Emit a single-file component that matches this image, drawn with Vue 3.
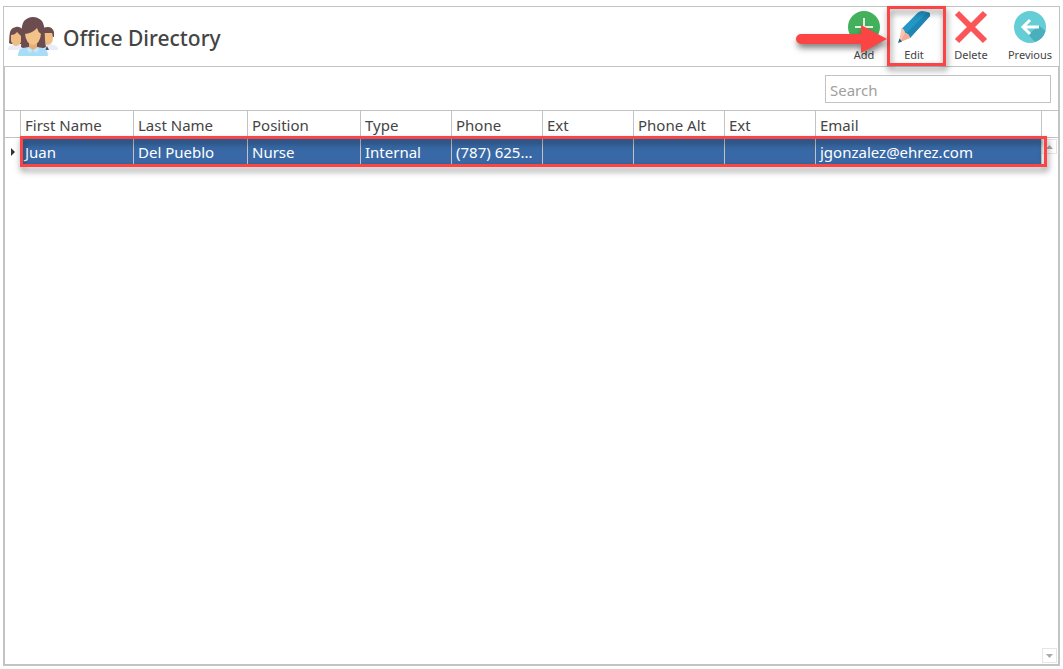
<script setup>
import { ref } from 'vue'

const search = ref('')
const columns = [
  { label: 'First Name', size: 'c113' },
  { label: 'Last Name', size: 'c114' },
  { label: 'Position', size: 'c113' },
  { label: 'Type', size: 'c91' },
  { label: 'Phone', size: 'c91' },
  { label: 'Ext', size: 'c91' },
  { label: 'Phone Alt', size: 'c91' },
  { label: 'Ext', size: 'c91' },
  { label: 'Email', size: 'fill' },
]
const rows = [
  ['Juan', 'Del Pueblo', 'Nurse', 'Internal', '(787) 625...', '', '', '', 'jgonzalez@ehrez.com'],
]
</script>

<template>
  <main class="window">
    <header class="bar">
      <svg class="people" viewBox="0 0 50 40" aria-hidden="true">
        <path d="M0 32c0-4 5-4 8-5h10v6H0z" fill="#e9edf8" />
        <path d="M50 32c0-4-5-4-8-5H34v6h16z" fill="#e9edf8" />
        <path d="M1 26C2 19 0 11 8 10c5-1 8 3 8 8v9H3z" fill="#6d4c4f" />
        <path d="M3 18q4 0 6-3l4 4v6q-2 4-5 4t-5-5z" fill="#efbd83" />
        <path d="M35 11q9-3 11 4v5H35z" fill="#6d4c4f" />
        <path d="M35 16h9l1 4q0 8-6 8-3 0-5-3z" fill="#efbd83" />
        <path d="M39 29l2 4h-4z" fill="#40506c" />
        <path d="M13 30C14 22 12 10 16 4q4-4 9-4t9 4c4 6 2 18 4 26-5 3-21 3-25 0z" fill="#6d4c4f" />
        <path d="M10 39q0-7 5-8l6-1h8l6 1q5 1 5 8z" fill="#a9dcf7" />
        <path d="M21 25h8v6q-4 5-8 0z" fill="#e5ae76" />
        <path d="M17 17q8-1 12-6 1 4 4 6-1 10-8 11-7-1-8-11z" fill="#f2c38b" />
        <path d="M20 30l5 3 5-3 1 3-3 3-3-3-3 3-3-3z" fill="#c3e8fb" />
      </svg>
      <h1>Office Directory</h1>

      <nav class="tools" aria-label="Directory actions">
        <button type="button" class="tool">
          <svg viewBox="0 0 34 34" aria-hidden="true">
            <circle cx="17" cy="17" r="16" fill="#43b05c" />
            <path d="M17 8v18M8 17h18" stroke="#e6f5e9" stroke-width="2" />
          </svg>
          <span>Add</span>
        </button>

        <div class="marked">
          <button type="button" class="tool">
            <svg viewBox="0 0 34 34" aria-hidden="true">
              <path d="M4.500 19L21 2.500Q23 1 25 1q5 0 8 2.500V6L13 28z" fill="#2597c4" />
              <path d="M9 23.500L31 2l2 1.500V6L13 28z" fill="#1f86b3" />
              <path d="M4.500 18.500q3 0 3.500 4.500 4 .5 5 5L3 32l-1-1z" fill="#fbc4b0" />
              <path d="M8 23q4 .5 5 5L3 32z" fill="#f3ac98" />
              <path d="M2.500 28.500l2.500 3-4 1.500z" fill="#17648c" />
            </svg>
            <span>Edit</span>
          </button>
          <div class="frame tool-frame"></div>
          <svg class="arrow" viewBox="0 0 92 30" aria-hidden="true">
            <path d="M5 10h60V1l26 14-26 14v-9H5a5 5 0 0 1 0-10z" fill="#fb4444" />
          </svg>
        </div>

        <button type="button" class="tool wide">
          <svg viewBox="0 0 34 34" aria-hidden="true">
            <path d="M3 3l28 28M31 3L3 31" stroke="#fc5558" stroke-width="6" />
          </svg>
          <span>Delete</span>
        </button>

        <button type="button" class="tool last">
          <svg viewBox="0 0 34 34" aria-hidden="true">
            <circle cx="17" cy="17" r="16" fill="#65cdd6" />
            <path d="M17 23L26 15.500L32.500 21A16 16 0 0 1 22 32L12 21z" fill="#4aafba" />
            <path d="M26 17H10M17 10l-7 7 7 7" fill="none" stroke="#fff" stroke-width="3" />
          </svg>
          <span>Previous</span>
        </button>
      </nav>
    </header>

    <section class="panel">
      <div class="search">
        <input v-model="search" type="text" placeholder="Search" aria-label="Search" />
      </div>

      <div class="grid">
        <table>
          <colgroup>
            <col class="edge" />
            <col v-for="(c, i) in columns" :key="i" :class="c.size" />
            <col class="edge" />
          </colgroup>
          <thead>
            <tr>
              <th></th>
              <th v-for="(c, i) in columns" :key="i" scope="col">{{ c.label }}</th>
              <th class="end"></th>
            </tr>
          </thead>
          <tbody>
            <tr v-for="(r, n) in rows" :key="n">
              <td class="marker">
                <svg viewBox="0 0 4 8" aria-hidden="true"><path d="M0 0l4 4-4 4z" fill="#333" /></svg>
              </td>
              <td v-for="(v, i) in r" :key="i" class="picked">{{ v }}</td>
              <td class="end"></td>
            </tr>
          </tbody>
        </table>
        <div class="scroll">
          <button type="button" aria-label="Scroll up">
            <svg viewBox="0 0 7 4" aria-hidden="true"><path d="M0 4h7L3.500 0z" fill="#aaa" /></svg>
          </button>
          <button type="button" aria-label="Scroll down">
            <svg viewBox="0 0 7 4" aria-hidden="true"><path d="M0 0h7L3.500 4z" fill="#aaa" /></svg>
          </button>
        </div>
        <div class="frame row-frame"></div>
      </div>
    </section>
  </main>
</template>

<style>
body {
  background: #fff;
}
</style>

<style scoped>
.window {
  box-sizing: border-box;
  min-height: calc(100vh - 9px);
  margin: 6px 3px 3px;
  border: 1px solid #c3c3c3;
  display: flex;
  flex-direction: column;
  color: #444;
  font-family: "Noto Sans", "Open Sans", sans-serif;
}
.bar {
  display: flex;
  align-items: center;
  height: 59px;
  padding: 0 2px 0 4px;
}
.people {
  width: 50px;
  height: 40px;
}
h1 {
  margin: 0 0 0 5px;
  padding-top: 2px;
  font-size: 21px;
  line-height: 28px;
  font-weight: 500;
  white-space: nowrap;
}
.tools {
  display: flex;
  align-self: stretch;
  margin-left: auto;
}
button {
  border: 0;
  padding: 0;
  background: none;
  color: inherit;
  font-family: inherit;
}
.tool {
  display: flex;
  flex-direction: column;
  align-items: center;
  width: 50px;
  padding-top: 3px;
  font-size: 11px;
  line-height: 16px;
}
.tool svg {
  width: 34px;
  height: 34px;
  margin-bottom: 3px;
}
.tool.wide {
  width: 64px;
}
.tool.last {
  width: 54px;
}
.marked {
  position: relative;
}
.frame {
  position: absolute;
  z-index: 2;
  box-sizing: border-box;
  border: 3px solid #fb4444;
  pointer-events: none;
  filter: drop-shadow(1px 4px 3px rgba(0, 0, 0, 0.5));
}
.tool-frame {
  top: -1px;
  left: -2px;
  width: 59px;
  height: 60px;
}
.arrow {
  position: absolute;
  z-index: 3;
  top: 17px;
  right: 51px;
  width: 92px;
  height: 30px;
  overflow: visible;
  pointer-events: none;
  filter: drop-shadow(1px 4px 3px rgba(0, 0, 0, 0.5));
}
.panel {
  flex: 1;
  display: flex;
  flex-direction: column;
  border: 1px solid #c3c3c3;
}
.search {
  display: flex;
  justify-content: flex-end;
  padding: 8px 7px 7px;
}
input {
  box-sizing: border-box;
  width: 226px;
  height: 28px;
  padding: 2px 4px 0;
  border: 1px solid #c3c3c3;
  background: #fff;
  color: #444;
  font-family: inherit;
  font-size: 15px;
}
input::placeholder {
  color: #a0a0a0;
  opacity: 1;
}
.grid {
  position: relative;
  flex: 1;
  display: flex;
  flex-direction: column;
  border-top: 1px solid #c3c3c3;
}
table {
  width: 100%;
  table-layout: fixed;
  border-collapse: separate;
  border-spacing: 0;
  font-size: 15px;
  line-height: 24px;
}
.edge {
  width: 16px;
}
.c91 {
  width: 91px;
}
.c113 {
  width: 113px;
}
.c114 {
  width: 114px;
}
th,
td {
  height: 24px;
  padding: 2px 4px 0;
  border-right: 1px solid #c3c3c3;
  text-align: left;
  font-weight: 400;
  white-space: nowrap;
  overflow: hidden;
  text-overflow: ellipsis;
}
th {
  border-bottom: 1px solid #c3c3c3;
}
th.end,
td.end,
td.marker {
  border-right: 0;
}
td.marker {
  padding: 2px 0 0 6px;
}
.marker svg {
  display: block;
  width: 4px;
  height: 8px;
}
.picked {
  background: #3869a6;
  color: #fff;
}
.scroll {
  position: absolute;
  top: 28px;
  right: 1px;
  bottom: 1px;
  display: flex;
  flex-direction: column;
  justify-content: space-between;
}
.scroll button {
  display: flex;
  align-items: center;
  justify-content: center;
  box-sizing: border-box;
  width: 15px;
  height: 15px;
  border: 1px solid #e6e6e6;
}
.scroll svg {
  width: 7px;
  height: 4px;
}
.row-frame {
  top: 25px;
  left: 15px;
  right: 11px;
  height: 31px;
}
</style>
